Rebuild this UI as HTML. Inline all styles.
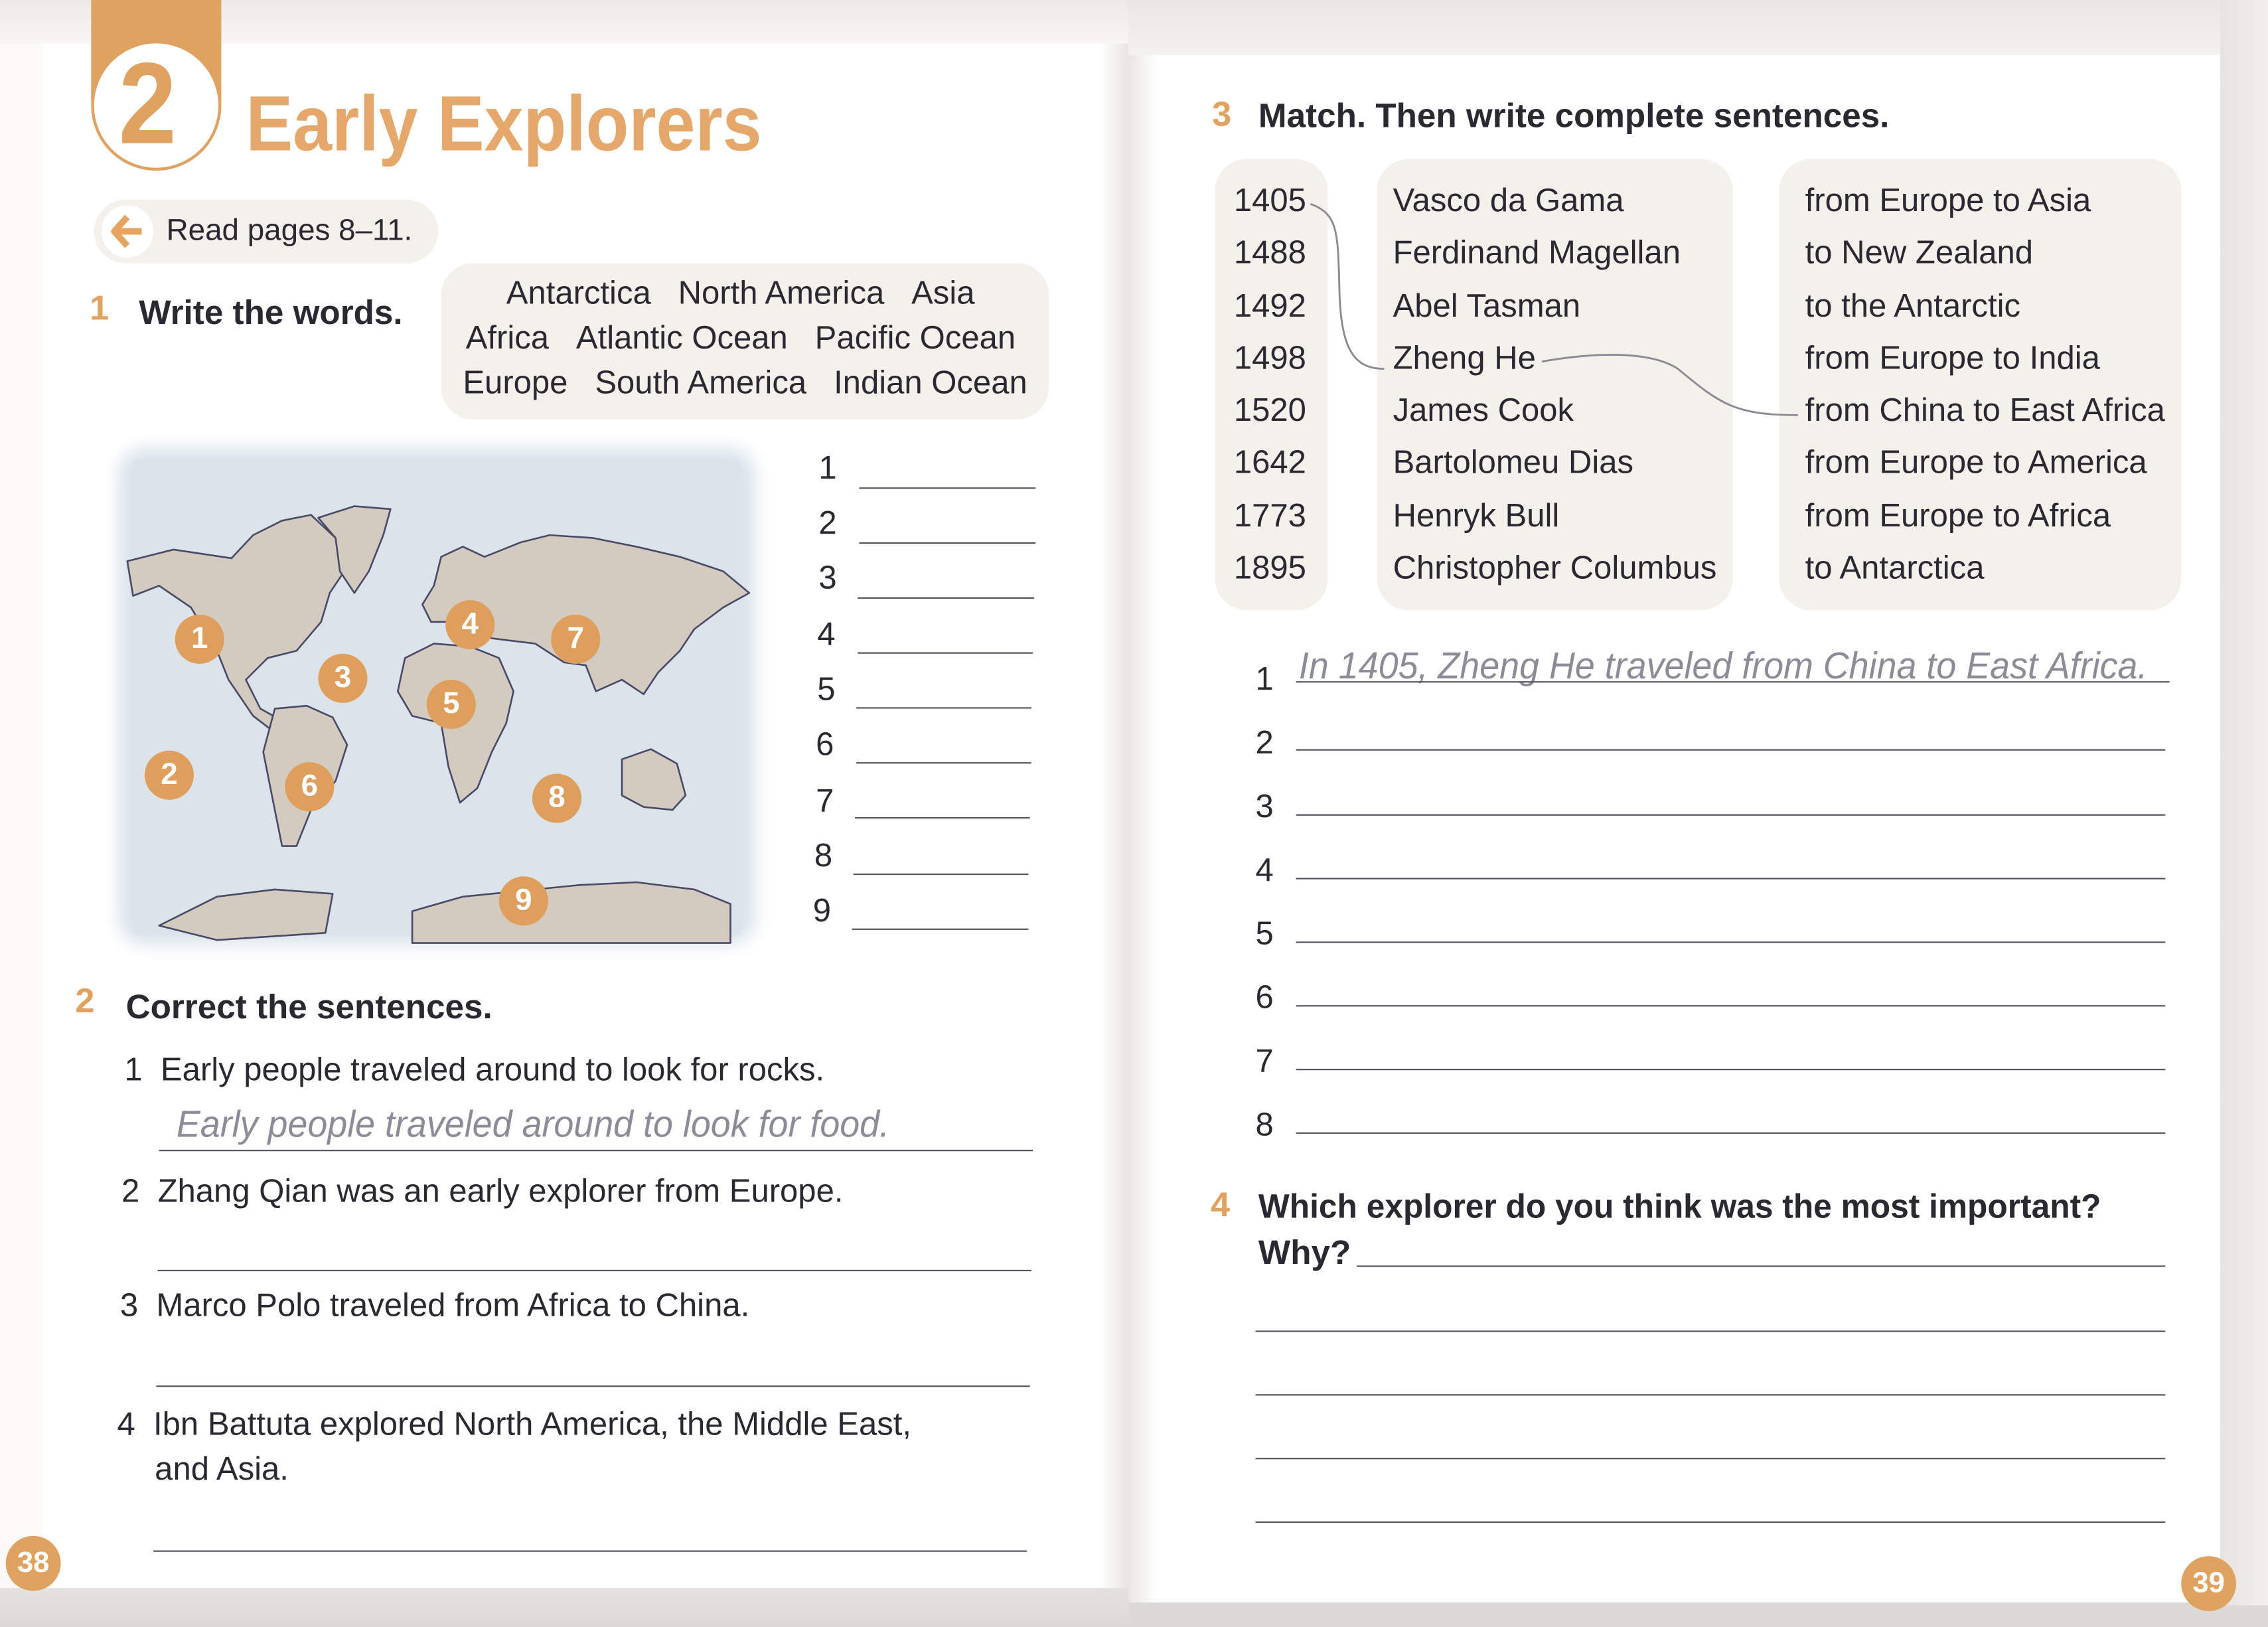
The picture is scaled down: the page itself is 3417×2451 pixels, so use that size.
<!DOCTYPE html>
<html><head><meta charset="utf-8"><style>
html,body{margin:0;padding:0;}
body{width:3417px;height:2451px;overflow:hidden;background:#e9e7e4;position:relative;}
#w{position:absolute;left:0;top:0;width:1568px;height:1125px;transform:scale(2.1792,2.1787);transform-origin:0 0;font-family:"Liberation Sans Narrow","Liberation Sans",sans-serif;color:#2a2830;}
.a{position:absolute;white-space:nowrap;}
.t{font-size:22.5px;line-height:26px;}
.o{color:#e1a25f;font-weight:bold;}
.ln{position:absolute;height:1.3px;background:#55535c;}
.hw{font-family:"Liberation Sans Narrow",sans-serif;color:#8d8b98;font-size:26px;line-height:30px;font-style:italic;transform:scaleX(.95);transform-origin:0 0;}
.num{position:absolute;width:34px;height:34px;border-radius:50%;background:#df9f5c;color:#fff;font-weight:bold;font-size:21px;line-height:34px;text-align:center;}
.box{position:absolute;background:#f4f1ec;border-radius:22px;}
.h{font-size:23.5px;font-weight:bold;}
</style></head><body><div id="w">
<!-- pages -->
<div class="a" style="left:0;top:0;width:780px;height:1100px;background:#fbfaf8;"></div>
<div class="a" style="left:30px;top:30px;width:750px;height:1072px;background:#fff;"></div>
<div class="a" style="left:780px;top:38px;width:755px;height:1072px;background:#fff;"></div>
<div class="a" style="left:760px;top:0;width:40px;height:1125px;background:linear-gradient(90deg,#fff,#e8e6e3 50%,#fff);"></div>
<div class="a" style="left:0;top:1098px;width:780px;height:27px;background:linear-gradient(#e4e2df,#dcdad7);"></div>
<div class="a" style="left:780px;top:1108px;width:788px;height:17px;background:#dcdad6;"></div>
<div class="a" style="left:1535px;top:0;width:33px;height:1110px;background:linear-gradient(90deg,#e6e4e1,#f2f1ee);"></div>
<div class="a" style="left:780px;top:0;width:755px;height:38px;background:linear-gradient(#e9e7e4,#f3f2f0);"></div>
<div class="a" style="left:0;top:0;width:780px;height:30px;background:linear-gradient(#eceae7,#f7f6f4);"></div>

<!-- title -->
<div class="a" style="left:63px;top:0;width:90px;height:70px;background:#e0a261;"></div>
<div class="a" style="left:63px;top:28px;width:86px;height:86px;border-radius:50%;background:#fff;border:2px solid #e0a261;"></div>
<div class="a" style="left:82px;top:24px;font-size:80px;line-height:96px;font-weight:bold;color:#e0a261;transform:scaleX(.9);transform-origin:0 0;">2</div>
<div class="a" style="left:170px;top:54px;font-size:54px;line-height:64px;font-weight:bold;color:#e5a86a;transform:scaleX(.9);transform-origin:0 0;">Early Explorers</div>

<div class="box" style="left:65px;top:138px;width:238px;height:44px;border-radius:22px;"></div>
<div class="a" style="left:70px;top:142px;width:36px;height:36px;border-radius:50%;background:#fff;"></div>
<svg class="a" style="left:74px;top:146px" width="28" height="28" viewBox="0 0 28 28"><path d="M14 4 L5 14 L14 24 M5 14 H24" stroke="#e6a460" stroke-width="4.5" fill="none" stroke-linejoin="round"/></svg>
<div class="a t" style="left:115px;top:147px;font-size:21px;">Read pages 8–11.</div>

<div class="a t o" style="left:62px;top:201px;font-size:24px;">1</div>
<div class="a t h" style="left:96px;top:203px;">Write the words.</div>
<div class="box" style="left:305px;top:182px;width:420px;height:108px;"></div>
<div class="a t" style="left:350px;top:190px;">Antarctica&nbsp;&nbsp;&nbsp;North America&nbsp;&nbsp;&nbsp;Asia</div>
<div class="a t" style="left:322px;top:221px;">Africa&nbsp;&nbsp;&nbsp;Atlantic Ocean&nbsp;&nbsp;&nbsp;Pacific Ocean</div>
<div class="a t" style="left:320px;top:252px;">Europe&nbsp;&nbsp;&nbsp;South America&nbsp;&nbsp;&nbsp;Indian Ocean</div>

<!-- map -->
<svg class="a" style="left:70px;top:300px" width="465" height="365" viewBox="70 300 465 365">
<defs><filter id="bl"><feGaussianBlur stdDeviation="6"/></filter></defs>
<rect x="82" y="310" width="440" height="343" rx="18" fill="#d9e3ea" filter="url(#bl)"/>
<rect x="92" y="318" width="420" height="328" fill="#dbe4eb"/>
<g fill="#d3cac0" stroke="#4a4a68" stroke-width="1.2" stroke-linejoin="round">
<path d="M88 388 L120 380 L160 386 L175 370 L195 360 L215 356 L232 372 L238 395 L228 410 L222 430 L205 450 L185 455 L170 470 L180 490 L198 500 L205 518 L192 508 L175 495 L158 470 L150 450 L132 420 L110 405 L92 412 Z"/>
<path d="M220 358 L245 350 L270 352 L265 370 L255 395 L245 410 L235 395 L232 372 Z"/>
<path d="M190 490 L212 488 L230 496 L240 515 L232 540 L215 560 L205 585 L195 585 L190 560 L182 520 Z"/>
<path d="M305 385 L320 378 L335 385 L360 375 L380 370 L410 372 L440 378 L470 385 L500 395 L518 410 L500 420 L480 435 L470 450 L455 465 L445 480 L430 470 L412 478 L405 460 L390 458 L370 445 L345 442 L330 440 L315 430 L298 430 L292 418 L300 405 Z"/>
<path d="M280 455 L300 445 L325 447 L345 455 L355 478 L350 500 L340 520 L330 545 L318 555 L310 530 L305 500 L285 495 L275 478 Z"/>
<path d="M430 525 L450 518 L468 528 L474 550 L465 560 L445 558 L430 550 Z"/>
<path d="M110 640 L150 620 L190 615 L230 618 L225 645 L150 650 Z"/>
<path d="M285 630 L320 620 L360 616 L400 612 L440 610 L480 615 L505 625 L505 652 L285 652 Z"/>
</g>
</svg>
<div class="num" style="left:121px;top:425px;">1</div>
<div class="num" style="left:100px;top:519px;">2</div>
<div class="num" style="left:220px;top:452px;">3</div>
<div class="num" style="left:308px;top:415px;">4</div>
<div class="num" style="left:295px;top:470px;">5</div>
<div class="num" style="left:197px;top:527px;">6</div>
<div class="num" style="left:381px;top:425px;">7</div>
<div class="num" style="left:368px;top:535px;">8</div>
<div class="num" style="left:345px;top:606px;">9</div>

<div class="a t" style="left:566px;top:311px;">1</div><div class="ln" style="left:594px;top:337px;width:122px;"></div>
<div class="a t" style="left:566px;top:349px;">2</div><div class="ln" style="left:594px;top:375px;width:122px;"></div>
<div class="a t" style="left:566px;top:387px;">3</div><div class="ln" style="left:593px;top:413px;width:122px;"></div>
<div class="a t" style="left:565px;top:426px;">4</div><div class="ln" style="left:593px;top:451px;width:121px;"></div>
<div class="a t" style="left:565px;top:464px;">5</div><div class="ln" style="left:592px;top:489px;width:121px;"></div>
<div class="a t" style="left:564px;top:502px;">6</div><div class="ln" style="left:592px;top:527px;width:121px;"></div>
<div class="a t" style="left:564px;top:541px;">7</div><div class="ln" style="left:591px;top:565px;width:121px;"></div>
<div class="a t" style="left:563px;top:579px;">8</div><div class="ln" style="left:590px;top:604px;width:121px;"></div>
<div class="a t" style="left:562px;top:617px;">9</div><div class="ln" style="left:589px;top:642px;width:122px;"></div>

<!-- section 2 -->
<div class="a t o" style="left:52px;top:680px;font-size:24px;">2</div>
<div class="a t h" style="left:87px;top:683px;">Correct the sentences.</div>
<div class="a t" style="left:86px;top:727px;">1&nbsp;&nbsp;Early people traveled around to look for rocks.</div>
<div class="a hw" style="left:122px;top:762px;">Early people traveled around to look for food.</div>
<div class="ln" style="left:110px;top:795px;width:604px;"></div>
<div class="a t" style="left:84px;top:811px;">2&nbsp;&nbsp;Zhang Qian was an early explorer from Europe.</div>
<div class="ln" style="left:109px;top:878px;width:604px;"></div>
<div class="a t" style="left:83px;top:890px;">3&nbsp;&nbsp;Marco Polo traveled from Africa to China.</div>
<div class="ln" style="left:108px;top:958px;width:604px;"></div>
<div class="a t" style="left:81px;top:972px;">4&nbsp;&nbsp;Ibn Battuta explored North America, the Middle East,</div>
<div class="a t" style="left:107px;top:1003px;">and Asia.</div>
<div class="ln" style="left:106px;top:1072px;width:604px;"></div>
<div class="a" style="left:4px;top:1062px;width:38px;height:38px;border-radius:50%;background:#e0a261;color:#fff;font-size:20px;line-height:38px;text-align:center;font-weight:bold;">38</div>

<!-- right page -->
<div class="a t o" style="left:838px;top:67px;font-size:24px;">3</div>
<div class="a t h" style="left:870px;top:67px;">Match. Then write complete sentences.</div>
<div class="box" style="left:840px;top:110px;width:78px;height:312px;"></div>
<div class="box" style="left:952px;top:110px;width:246px;height:312px;"></div>
<div class="box" style="left:1230px;top:110px;width:278px;height:312px;"></div>
<div class="a t" style="left:853px;top:121px;line-height:36.3px;">1405<br>1488<br>1492<br>1498<br>1520<br>1642<br>1773<br>1895</div>
<div class="a t" style="left:963px;top:121px;line-height:36.3px;">Vasco da Gama<br>Ferdinand Magellan<br>Abel Tasman<br>Zheng He<br>James Cook<br>Bartolomeu Dias<br>Henryk Bull<br>Christopher Columbus</div>
<div class="a t" style="left:1248px;top:121px;line-height:36.3px;">from Europe to Asia<br>to New Zealand<br>to the Antarctic<br>from Europe to India<br>from China to East Africa<br>from Europe to America<br>from Europe to Africa<br>to Antarctica</div>
<svg class="a" style="left:0;top:0" width="1568" height="1125"><path d="M906 141 C925 148 925 160 926 200 C927 240 935 255 957 255" stroke="#8a8a92" stroke-width="1.3" fill="none"/><path d="M1066 250 C1100 244 1140 242 1160 255 C1190 280 1200 287 1243 287" stroke="#8a8a92" stroke-width="1.3" fill="none"/></svg>

<div class="a hw" style="left:898px;top:445px;">In 1405, Zheng He traveled from China to East Africa.</div>
<div class="a t" style="left:868px;top:457px;">1</div><div class="ln" style="left:896px;top:471px;width:604px;"></div>
<div class="a t" style="left:868px;top:501px;">2</div><div class="ln" style="left:896px;top:518px;width:601px;"></div>
<div class="a t" style="left:868px;top:545px;">3</div><div class="ln" style="left:896px;top:563px;width:601px;"></div>
<div class="a t" style="left:868px;top:589px;">4</div><div class="ln" style="left:896px;top:607px;width:601px;"></div>
<div class="a t" style="left:868px;top:633px;">5</div><div class="ln" style="left:896px;top:651px;width:601px;"></div>
<div class="a t" style="left:868px;top:677px;">6</div><div class="ln" style="left:896px;top:695px;width:601px;"></div>
<div class="a t" style="left:868px;top:721px;">7</div><div class="ln" style="left:896px;top:739px;width:601px;"></div>
<div class="a t" style="left:868px;top:765px;">8</div><div class="ln" style="left:896px;top:783px;width:601px;"></div>

<div class="a t o" style="left:837px;top:821px;font-size:24px;">4</div>
<div class="a t h" style="left:870px;top:821px;transform:scaleX(.97);transform-origin:0 0;">Which explorer do you think was the most important?</div>
<div class="a t h" style="left:870px;top:853px;">Why?</div>
<div class="ln" style="left:938px;top:875px;width:559px;"></div>
<div class="ln" style="left:868px;top:920px;width:629px;"></div>
<div class="ln" style="left:868px;top:964px;width:629px;"></div>
<div class="ln" style="left:868px;top:1008px;width:629px;"></div>
<div class="ln" style="left:868px;top:1052px;width:629px;"></div>
<div class="a" style="left:1508px;top:1076px;width:38px;height:38px;border-radius:50%;background:#e0a261;color:#fff;font-size:20px;line-height:38px;text-align:center;font-weight:bold;">39</div>
</div></body></html>
